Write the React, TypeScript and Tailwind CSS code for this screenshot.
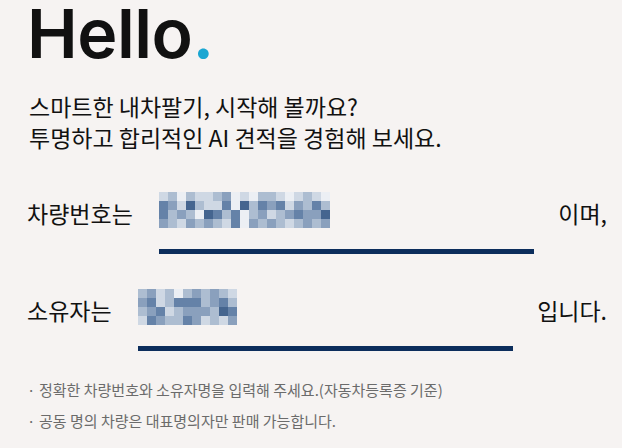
import React from 'react';

// palette for the blurred (mosaic) value in each field
const shades = ['#eceff4', '#cfd8e4', '#adbdd1', '#8aa0bd', '#6582a8', '#45658f'];

const plateMosaic = [
  '1202112301022101210',
  '4315211405243413242',
  '4232054240231234335',
  '3213232140323212323',
];

const ownerMosaic = [
  '23120232321',
  '34124442342',
  '23412333254',
  '14322431213',
];

function Mosaic({ rows }: { rows: string[] }) {
  const cell = 9;
  const w = rows[0].length * cell;
  const h = rows.length * cell;
  return (
    <svg width={w} height={h} viewBox={`0 0 ${w} ${h}`} className="block">
      {rows.map((row, y) =>
        row.split('').map((c, x) => (
          <rect key={`${x}-${y}`} x={x * cell} y={y * cell} width={cell} height={cell} fill={shades[Number(c)]} />
        ))
      )}
    </svg>
  );
}

function FieldRow({ label, suffix, rows }: { label: string; suffix: string; rows: string[] }) {
  return (
    <div className="flex items-start">
      <span className="mt-[5px] text-[23px] leading-[32px] text-[#111]">{label}</span>
      <div className="ml-[26px] flex w-[375px] flex-col">
        <Mosaic rows={rows} />
        <div className="mt-[21px] h-[5px] w-full bg-[#0c2d5c]" />
      </div>
      <span className="mt-[5px] ml-auto text-[23px] leading-[32px] text-[#111]">{suffix}</span>
    </div>
  );
}

export default function App() {
  return (
    <div
      className="h-[448px] w-[622px] overflow-hidden bg-[#f6f3f2] pl-[27px] pr-[15px]"
      style={{ fontFamily: '"Noto Sans CJK KR", "Noto Sans", sans-serif' }}
    >
      <h1 className="font-['Inter',sans-serif] text-[68px] font-semibold leading-[66px] tracking-[-0.5px] text-[#111]">
        Hello<span className="text-[#1aa6d2]">.</span>
      </h1>

      <p className="mt-[25px] pl-[2px] text-[23px] font-normal leading-[31px] text-[#111]">
        스마트한 내차팔기, 시작해 볼까요?
        <br />
        투명하고 합리적인 AI 견적을 경험해 보세요.
      </p>

      <div className="mt-[39px] flex flex-col gap-[35px]">
        <FieldRow label="차량번호는" suffix="이며," rows={plateMosaic} />
        <FieldRow label="소유자는" suffix="입니다." rows={ownerMosaic} />
      </div>

      <ul className="mt-[23px] text-[15px] leading-[31px] text-[#6b6b6b]">
        <li className="flex">
          <span className="w-[12px]">·</span>
          정확한 차량번호와 소유자명을 입력해 주세요.(자동차등록증 기준)
        </li>
        <li className="flex">
          <span className="w-[12px]">·</span>
          공동 명의 차량은 대표명의자만 판매 가능합니다.
        </li>
      </ul>
    </div>
  );
}
